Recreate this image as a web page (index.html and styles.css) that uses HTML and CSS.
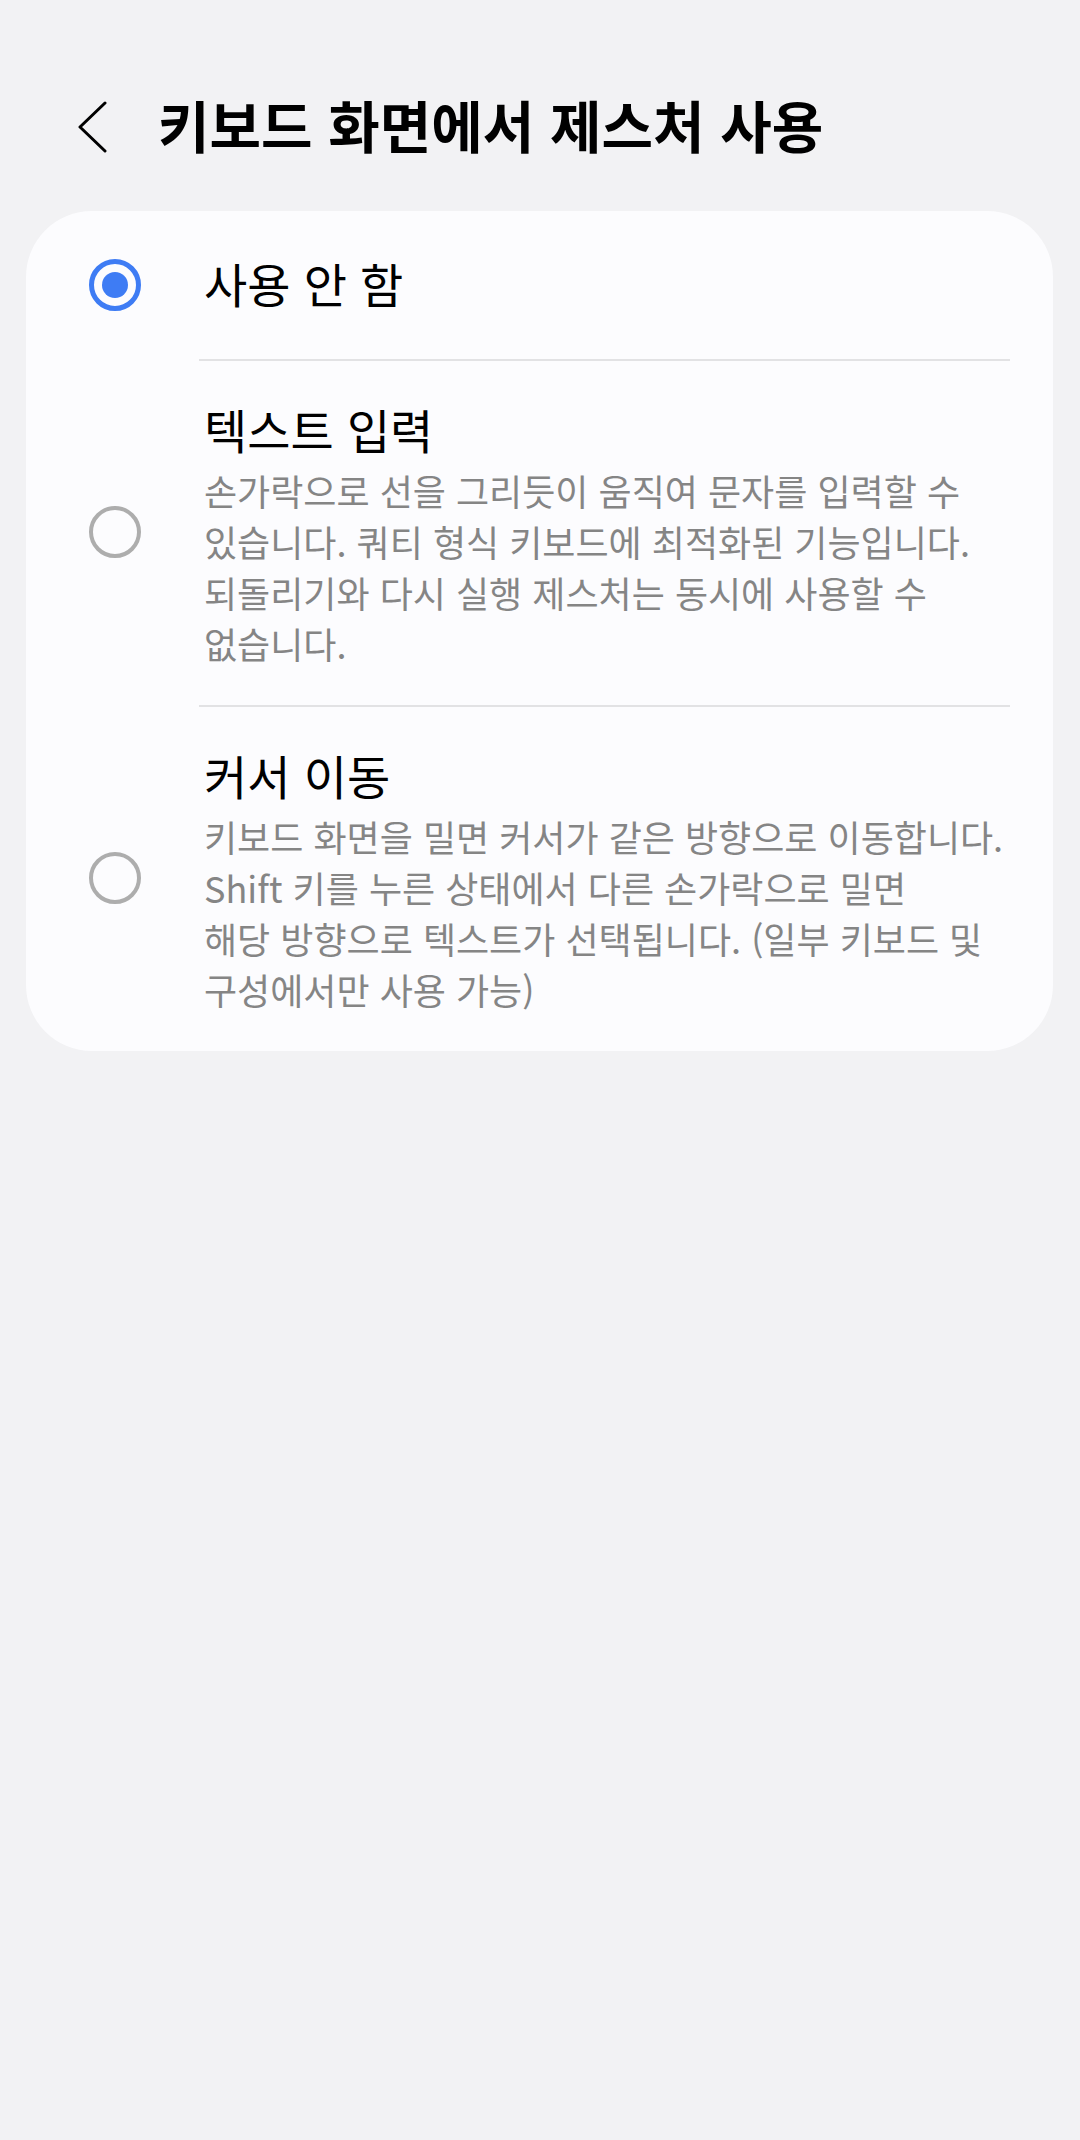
FILE: index.html
```html
<!DOCTYPE html>
<html lang="ko">
<head>
    <meta charset="utf-8">
    <link rel="stylesheet" href="styles.css">
</head>

<body>
<div class="header">
    <svg class="back" width="30" height="52" viewBox="0 0 30 52">
        <path d="M27 2 L2 26 L27 50" fill="none" stroke="#000" stroke-width="3" stroke-linecap="round" stroke-linejoin="round"/>
    </svg>
    <h1 class="title">키보드 화면에서 제스처 사용</h1>
</div>

<div class="card">
    <div class="option">
        <span class="radio checked"></span>
        <div class="option-body first">
            <div class="option-title">사용 안 함</div>
        </div>
    </div>
    <div class="option">
        <span class="radio"></span>
        <div class="option-body">
            <div class="option-title">텍스트 입력</div>
            <div class="option-desc">손가락으로 선을 그리듯이 움직여 문자를 입력할 수<br>있습니다. 쿼티 형식 키보드에 최적화된 기능입니다.<br>되돌리기와 다시 실행 제스처는 동시에 사용할 수<br>없습니다.</div>
        </div>
    </div>
    <div class="option">
        <span class="radio"></span>
        <div class="option-body">
            <div class="option-title">커서 이동</div>
            <div class="option-desc">키보드 화면을 밀면 커서가 같은 방향으로 이동합니다.<br>Shift 키를 누른 상태에서 다른 손가락으로 밀면<br>해당 방향으로 텍스트가 선택됩니다. (일부 키보드 및<br>구성에서만 사용 가능)</div>
        </div>
    </div>
</div>
</body>
</html>
```

FILE: styles.css
```css
html, body {
  margin: 0;
  background-color: #f2f2f4;
}

body {
  font-family: "Noto Sans CJK KR", "Noto Sans", sans-serif;
  min-height: 2140px;
}

.header {
  display: flex;
  align-items: flex-start;
  height: 70px;
  margin-top: 89px;
  padding-left: 78px;
}

.back {
  flex: none;
  margin-top: 12px;
}

.title {
  margin: 0 0 0 50px;
  font-size: 56px;
  line-height: 70px;
  font-weight: 700;
  letter-spacing: 0;
  color: #000;
}

.card {
  margin: 52px 27px 0 26px;
  background-color: #fcfcfe;
  border-radius: 66px;
}

.option {
  display: flex;
  align-items: center;
  padding-left: 63px;
}

.radio {
  flex: none;
  box-sizing: border-box;
  width: 52px;
  height: 52px;
  border: 4px solid #adadad;
  border-radius: 50%;
  margin-right: 58px;
  display: flex;
  align-items: center;
  justify-content: center;
}

.radio.checked {
  border: 5.5px solid #3e7cf4;
}

.radio.checked::after {
  content: "";
  width: 26px;
  height: 26px;
  border-radius: 50%;
  background-color: #3e7cf4;
}

.option-body {
  flex: 1;
  margin-right: 43px;
  padding: 38px 0 36px 5px;
  border-top: 2px solid #e2e2e4;
}

.option-body.first {
  border-top: none;
  padding-top: 42px;
  padding-bottom: 46px;
}

.option-title {
  font-size: 47px;
  line-height: 60px;
  letter-spacing: 0;
  color: #000;
}

.option-desc {
  margin-top: 6px;
  font-size: 36px;
  line-height: 51px;
  letter-spacing: 0;
  color: #858585;
  white-space: nowrap;
}
```
